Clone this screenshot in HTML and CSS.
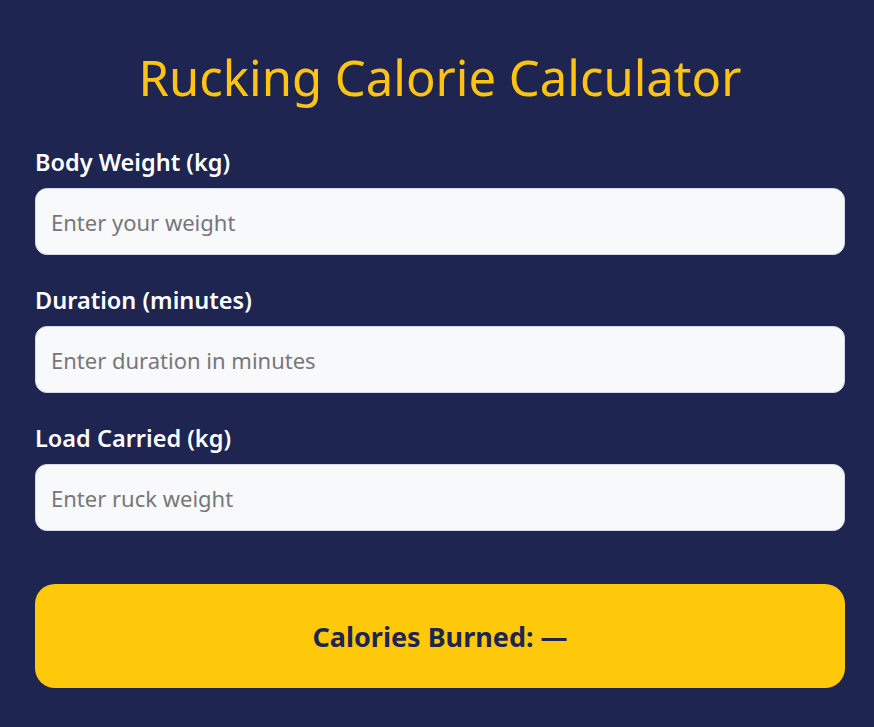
FILE: index.html
```html
<!DOCTYPE html>
<html lang="en">
<head>
    <meta charset="UTF-8">
    <meta name="viewport" content="width=device-width, initial-scale=1.0">
    <title>Rucking Calorie Calculator</title>
    <link rel="stylesheet" href="styles.css">
</head>
<body>
    <div class="calculator">
        <h1>Rucking Calorie Calculator</h1>
        <div class="form-group">
            <label for="weight">Body Weight (kg)</label>
            <input type="number" id="weight" placeholder="Enter your weight">
        </div>
        <div class="form-group">
            <label for="duration">Duration (minutes)</label>
            <input type="number" id="duration" placeholder="Enter duration in minutes">
        </div>
        <div class="form-group">
            <label for="load">Load Carried (kg)</label>
            <input type="number" id="load" placeholder="Enter ruck weight">
        </div>
        <div id="result" class="result">Calories Burned: &mdash;</div>
    </div>

    <script>
        const fields = ['weight', 'duration', 'load'].map(id => document.getElementById(id));
        const result = document.getElementById('result');

        function update() {
            const [weight, duration, load] = fields.map(f => parseFloat(f.value));
            if (!weight || !duration || isNaN(load)) {
                result.textContent = 'Calories Burned: \u2014';
                return;
            }
            // rough MET estimate: walking ~3.5, plus extra for the pack
            const met = 3.5 + load * 0.1;
            const kcal = met * weight * (duration / 60);
            result.textContent = `Calories Burned: ${Math.round(kcal)}`;
        }

        fields.forEach(f => f.addEventListener('input', update));
    </script>
</body>
</html>
```

FILE: styles.css
```css
html, body {
    margin: 0;
    background-color: #1e2550;
}
body {
    font-family: "Noto Sans", "Open Sans", Arial, sans-serif;
    color: #ffffff;
}
.calculator {
    padding: 38px 29px 40px 35px;
}
h1 {
    margin: 0 0 30px;
    text-align: center;
    font-size: 49px;
    font-weight: 400;
    line-height: 78px;
    color: #ffc412;
}
.form-group {
    margin-bottom: 29px;
}
label {
    display: block;
    margin-bottom: 10px;
    font-size: 23.5px;
    font-weight: 600;
    line-height: 32px;
}
input {
    display: block;
    box-sizing: border-box;
    width: 100%;
    height: 67px;
    padding: 0 15px;
    font-family: inherit;
    font-size: 22px;
    color: #333;
    background-color: #f7f9fb;
    border: 1px solid #d6d9e0;
    border-radius: 12px;
    outline: none;
}
input::placeholder {
    color: #777777;
}
.result {
    margin-top: 53px;
    height: 104px;
    display: flex;
    align-items: center;
    justify-content: center;
    font-size: 27px;
    font-weight: 700;
    color: #1e2550;
    background-color: #ffc90b;
    border-radius: 20px;
}
```
